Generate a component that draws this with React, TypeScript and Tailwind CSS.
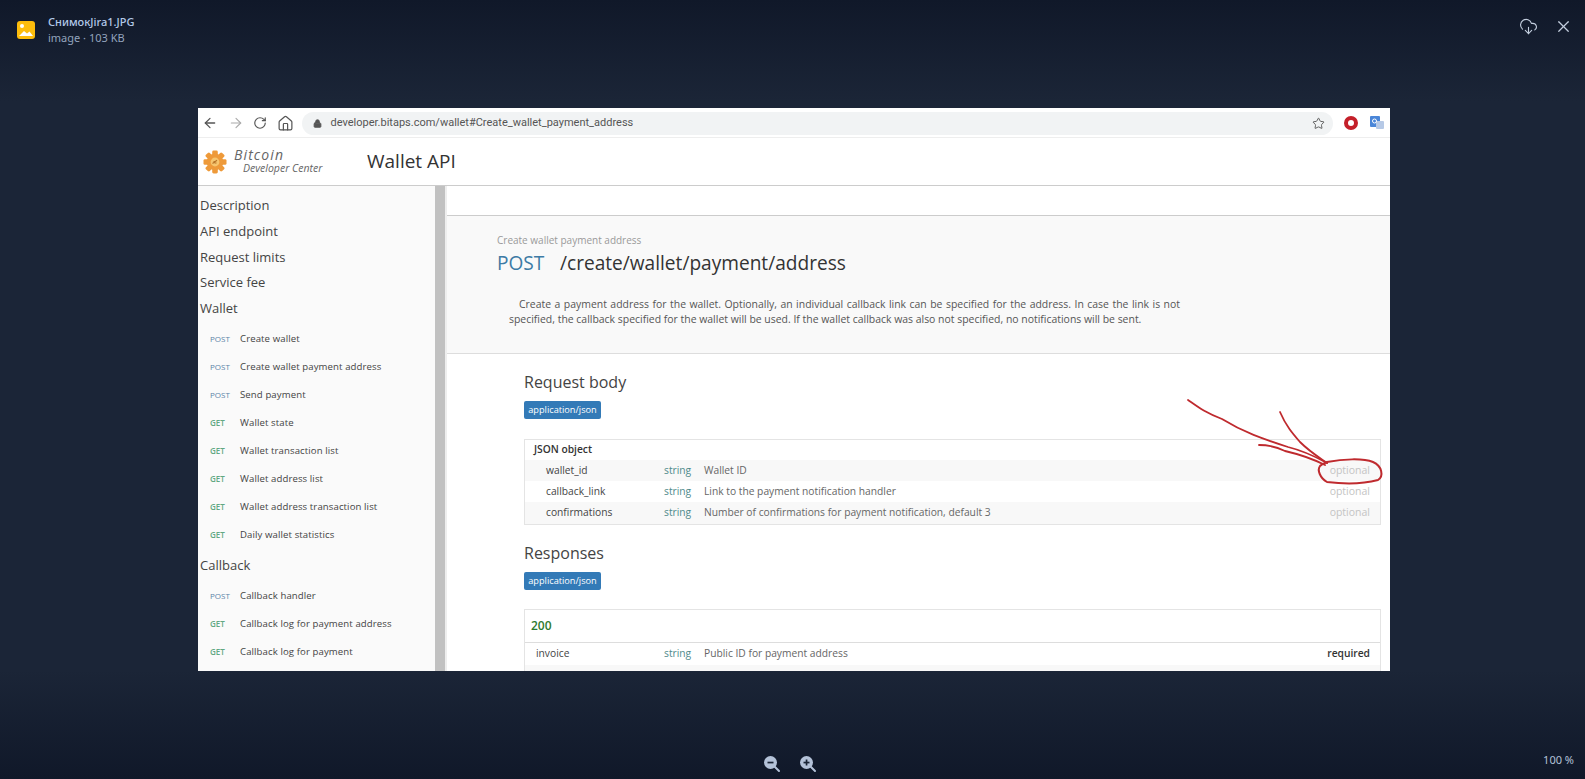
import { ArrowLeft, ArrowRight, RotateCw, Home, Lock, Star, CloudDownload, X } from 'lucide-react';

const topLinks = ['Description', 'API endpoint', 'Request limits', 'Service fee', 'Wallet'];

const walletLinks = [
  ['POST', 'Create wallet'],
  ['POST', 'Create wallet payment address'],
  ['POST', 'Send payment'],
  ['GET', 'Wallet state'],
  ['GET', 'Wallet transaction list'],
  ['GET', 'Wallet address list'],
  ['GET', 'Wallet address transaction list'],
  ['GET', 'Daily wallet statistics'],
];

const callbackLinks = [
  ['POST', 'Callback handler'],
  ['GET', 'Callback log for payment address'],
  ['GET', 'Callback log for payment'],
];

const requestRows = [
  ['wallet_id', 'Wallet ID'],
  ['callback_link', 'Link to the payment notification handler'],
  ['confirmations', 'Number of confirmations for payment notification, default 3'],
];

function SideLink({ method, label }: { method: string; label: string }) {
  return (
    <div className="flex items-center h-[28px] pl-[12px] text-[9.6px]">
      <span
        className={
          method === 'POST'
            ? 'w-[30px] text-[8px] text-[#5b84a8]'
            : 'w-[30px] text-[8px] font-semibold text-[#62a883]'
        }
      >
        {method}
      </span>
      <span className="text-[#444] tracking-[0.1px]">{label}</span>
    </div>
  );
}

function MimeBadge() {
  return (
    <div className="w-[77px] h-[18px] flex items-center justify-center rounded-[2px] bg-[#337ab7] text-white text-[9.2px]">
      application/json
    </div>
  );
}

function ZoomIcon({ plus }: { plus?: boolean }) {
  return (
    <svg width="18" height="18" viewBox="0 0 18 18">
      <line x1="11" y1="11" x2="16" y2="16" stroke="#b4c2d8" strokeWidth="2" strokeLinecap="round" />
      <circle cx="7.5" cy="7.5" r="6.5" fill="#b4c2d8" />
      <rect x="4.5" y="6.7" width="6" height="1.7" fill="#1a2435" />
      {plus && <rect x="6.7" y="4.5" width="1.7" height="6" fill="#1a2435" />}
    </svg>
  );
}

function GearLogo() {
  const teeth = [0, 45, 90, 135, 180, 225, 270, 315];
  return (
    <svg width="24" height="24" viewBox="0 0 24 24">
      {teeth.map((a) => (
        <rect key={a} x="9.2" y="0.5" width="5.6" height="6" rx="1.4" fill="#ee9a3a" transform={`rotate(${a} 12 12)`} />
      ))}
      <circle cx="12" cy="12" r="8.3" fill="#ee9a3a" />
      <circle cx="12" cy="12" r="4.4" fill="#f6c56f" />
      <path d="M9.5 13.5l4.5-3.2M10.5 11.5l2 0M11.5 13l2 0" stroke="#b8752a" strokeWidth="1.1" fill="none" />
    </svg>
  );
}

// red marker drawn over the picture, coords relative to the image
function RedScribble() {
  return (
    <svg className="absolute left-0 top-0 pointer-events-none" width="1192" height="563" viewBox="0 0 1192 563" fill="none">
      <g stroke="#bf2a2e" strokeWidth="1.8" strokeLinecap="round" strokeLinejoin="round">
        <path d="M990 292C1000 299 1006 304 1024 311C1045 324 1065 331 1090 339C1110 344 1125 353 1129 355" />
        <path d="M1082 304C1088 318 1095 326 1102 334C1112 344 1122 350 1129 355" />
        <path d="M1061 337C1070 337 1077 338 1087 343C1100 346 1115 351 1127 357" />
        <path d="M1129 354C1145 351 1165 350 1175 354C1184 358 1186 368 1180 372C1165 376 1145 376 1129 374C1122 370 1119 362 1122 358C1124 356 1127 355 1129 354Z" strokeWidth="2" />
      </g>
    </svg>
  );
}

export default function App() {
  return (
    <div className="w-[1585px] h-[779px] overflow-hidden flex flex-col bg-[linear-gradient(180deg,#101829_0%,#1b2537_13%,#1b2537_86%,#101829_100%)] font-['Noto_Sans',sans-serif]">
      {/* viewer top bar */}
      <div className="h-[108px] shrink-0 flex items-start pl-[17px] pr-[12px] pt-[14px]">
        <div className="w-[18px] h-[18px] mt-[7px] rounded-[3px] bg-[#fdbd0c] relative overflow-hidden">
          <svg width="18" height="18" viewBox="0 0 18 18" className="absolute left-0 top-0">
            <circle cx="5" cy="5" r="2" fill="#fff" />
            <path d="M2 15L7 10L10 12.5L12.5 10.5L16 15Z" fill="#fff" />
          </svg>
        </div>
        <div className="ml-[13px] flex flex-col">
          <span className="text-[11px] leading-[16px] font-medium text-[#b3c9e8]">СнимокJira1.JPG</span>
          <span className="text-[11px] leading-[16px] text-[#93a3bd]">image · 103 KB</span>
        </div>
        <div className="ml-auto flex items-center gap-[16px] pt-[3px] text-[#c3cede]">
          <CloudDownload size={19} strokeWidth={1.4} />
          <X size={19} strokeWidth={1.5} />
        </div>
      </div>

      {/* the picture */}
      <div className="relative ml-[198px] w-[1192px] h-[563px] shrink-0 overflow-hidden bg-white font-['Open_Sans',sans-serif] flex flex-col">
        {/* browser toolbar */}
        <div className="h-[30px] shrink-0 flex items-center pl-[4px] pt-[1px] border-b border-[#eee]">
          <ArrowLeft size={16} strokeWidth={1.9} className="text-[#555]" />
          <ArrowRight size={16} strokeWidth={1.7} className="ml-[9.5px] text-[#aaa]" />
          <RotateCw size={14} strokeWidth={2} className="ml-[9.5px] text-[#555]" />
          <Home size={17} strokeWidth={1.7} className="ml-[9.5px] text-[#555]" />
          <div className="ml-[8.5px] h-[23px] w-[1031px] rounded-full bg-[#f1f3f4] flex items-center pl-[11px] pr-[8px]">
            <Lock size={9} strokeWidth={2.5} className="text-[#555]" fill="#555" />
            <span className="ml-[8.5px] pt-[1px] text-[11px] text-[#555] font-['Roboto',sans-serif]">
              developer.bitaps.com/wallet#Create_wallet_payment_address
            </span>
            <Star size={13} strokeWidth={1.7} className="ml-auto text-[#555]" />
          </div>
          <div className="ml-[11px] w-[14px] h-[14px] rounded-full border-[4px] border-[#c4202a] bg-white" />
          <svg width="14" height="14" viewBox="0 0 14 14" className="ml-[12px]">
            <rect x="0" y="0" width="10" height="11" rx="1" fill="#4a86d8" />
            <rect x="6" y="5" width="8" height="8" rx="1" fill="#b6c9e6" />
            <circle cx="4.5" cy="5" r="2" fill="none" stroke="#fff" strokeWidth="1" />
          </svg>
        </div>

        {/* site header */}
        <div className="h-[48px] shrink-0 flex items-center pl-[5px] border-b border-[#ccc]">
          <GearLogo />
          <div className="ml-[7px] flex flex-col italic text-[#666] w-[89px] -mt-[2px]">
            <span className="text-[14px] leading-[14px] tracking-[1.1px]">Bitcoin</span>
            <span className="text-[10.5px] leading-[12px] pl-[9px] whitespace-nowrap">Developer Center</span>
          </div>
          <h1 className="ml-[44px] text-[19px] text-[#333] font-normal">Wallet API</h1>
        </div>

        <div className="flex flex-1 min-h-0">
          {/* sidebar */}
          <div className="w-[237px] shrink-0 bg-[#fafafa] pt-[7px] pl-[2px] overflow-hidden">
            {topLinks.map((t) => (
              <div key={t} className="h-[25.8px] leading-[25.8px] text-[13px] text-[#444]">
                {t}
              </div>
            ))}
            <div className="-ml-[2px] mt-[3px]">
              {walletLinks.map(([m, l]) => (
                <SideLink key={l} method={m} label={l} />
              ))}
            </div>
            <div className="h-[32px] leading-[32px] text-[13px] text-[#444]">Callback</div>
            <div className="-ml-[2px] mt-[1px]">
              {callbackLinks.map(([m, l]) => (
                <SideLink key={l} method={m} label={l} />
              ))}
            </div>
          </div>
          <div className="w-[10px] shrink-0 bg-[#c1c1c1]" />
          <div className="w-[2px] shrink-0 bg-[#eee]" />

          {/* main */}
          <div className="flex-1 min-w-0">
            <div className="h-[30px] bg-white border-b border-[#ccc]" />
            <div className="h-[138px] bg-[#f9f9f9] border-b border-[#ddd] pl-[50px] pt-[17px]">
              <div className="text-[10px] leading-[14px] text-[#999]">Create wallet payment address</div>
              <div className="mt-[2px] text-[19.1px] leading-[28px] text-[#333] flex">
                <span className="font-medium text-[#3d7ba5] w-[63px]">POST</span>
                <span>/create/wallet/payment/address</span>
              </div>
              <p className="mt-[20px] ml-[12px] w-[671px] text-[10.45px] leading-[15px] text-[#555] text-justify indent-[10px]">
                Create a payment address for the wallet. Optionally, an individual callback link can be specified for the address. In case the link is not specified, the callback specified for the wallet will be used. If the wallet callback was also not specified, no notifications will be sent.
              </p>
            </div>

            <div className="pl-[77px] pr-[9px]">
              <h2 className="mt-[16px] text-[16px] leading-[24px] text-[#444] font-normal">Request body</h2>
              <div className="mt-[7px]">
                <MimeBadge />
              </div>
              <div className="mt-[20px] border border-[#e4e4e4] text-[10.25px]">
                <div className="h-[20px] flex items-center pl-[9px] font-semibold text-[#333]">JSON object</div>
                {requestRows.map(([name, desc], i) => (
                  <div key={name} className={i % 2 === 0 ? 'h-[21.2px] flex items-center pl-[21px] pr-[10px] bg-[#f8f8f8]' : 'h-[21.2px] flex items-center pl-[21px] pr-[10px]'}>
                    <span className="w-[118px] text-[#444]">{name}</span>
                    <span className="w-[40px] text-[#4f8a8b]">string</span>
                    <span className="text-[#666]">{desc}</span>
                    <span className="ml-auto text-[#c4c4c4] text-[10.5px]">optional</span>
                  </div>
                ))}
              </div>

              <h2 className="mt-[16px] text-[16px] leading-[24px] text-[#444] font-normal">Responses</h2>
              <div className="mt-[7px]">
                <MimeBadge />
              </div>
              <div className="mt-[19px] border border-[#e4e4e4] text-[10.25px]">
                <div className="h-[33px] pt-[1px] flex items-center pl-[6px] border-b border-[#ddd] text-[12px] font-semibold text-[#2d7a2d]">200</div>
                <div className="h-[22px] flex items-center pl-[11px] pr-[10px]">
                  <span className="w-[128px] text-[#444]">invoice</span>
                  <span className="w-[40px] text-[#4f8a8b]">string</span>
                  <span className="text-[#666]">Public ID for payment address</span>
                  <span className="ml-auto font-semibold text-[#333]">required</span>
                </div>
                <div className="h-[22px] flex items-center pl-[11px] pr-[10px] bg-[#f8f8f8]">
                  <span className="w-[128px] text-[#444]">payment_code</span>
                  <span className="w-[40px] text-[#4f8a8b]">string</span>
                  <span className="text-[#666]">Payment code to be used with the callback for this wallet address</span>
                  <span className="ml-auto font-semibold text-[#333]">required</span>
                </div>
              </div>
            </div>
          </div>
        </div>

        <RedScribble />
      </div>

      {/* viewer bottom bar */}
      <div className="flex-1 flex items-center pl-[763px] pr-[11px] pt-[78px]">
        <ZoomIcon />
        <span className="ml-[18px]">
          <ZoomIcon plus />
        </span>
        <span className="ml-auto -mt-[8px] text-[11px] text-[#b3c2d8]">100 %</span>
      </div>
    </div>
  );
}
